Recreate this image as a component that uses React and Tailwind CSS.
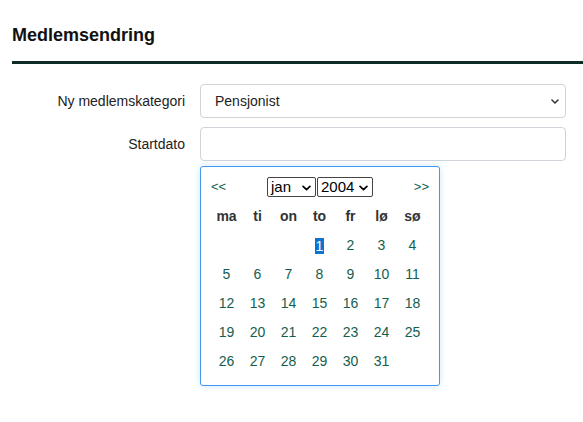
import React from 'react';

const DAYS = ['ma', 'ti', 'on', 'to', 'fr', 'lø', 'sø'];

const WEEKS = [
  [null, null, null, 1, 2, 3, 4],
  [5, 6, 7, 8, 9, 10, 11],
  [12, 13, 14, 15, 16, 17, 18],
  [19, 20, 21, 22, 23, 24, 25],
  [26, 27, 28, 29, 30, 31, null],
];

function Chevron({ className }) {
  return (
    <svg viewBox="0 0 10 6" className={className} fill="none" stroke="currentColor" strokeWidth="1.9" strokeLinecap="round" strokeLinejoin="round">
      <path d="M1.2 1.2 5 4.8 8.8 1.2" />
    </svg>
  );
}

function MiniSelect({ value, width }) {
  return (
    <div className={`relative h-[20px] ${width} border border-[#444] rounded-[2px] bg-white`}>
      <span className="absolute left-[3px] top-0 leading-[18px] text-[15px] text-black">{value}</span>
      <Chevron className="absolute right-[4px] top-[7px] w-[9px] h-[6px] text-black" />
    </div>
  );
}

function Calendar() {
  return (
    <div className="absolute left-0 top-[39px] w-[240px] h-[220px] bg-white border border-[#3d9af0] rounded-[3px] shadow-[0_0_6px_rgba(61,154,240,0.25)]">
      {/* header */}
      <div className="flex items-center justify-between px-[10px] pt-[10px] h-[30px]">
        <span className="text-[13px] text-[#135e4e] leading-4">&lt;&lt;</span>
        <div className="flex gap-[1px]">
          <MiniSelect value="jan" width="w-[49px]" />
          <MiniSelect value="2004" width="w-[56px]" />
        </div>
        <span className="text-[13px] text-[#135e4e] leading-4">&gt;&gt;</span>
      </div>

      {/* grid */}
      <div className="px-[10px] mt-[5px]">
        <div className="grid grid-cols-7 w-[217px]">
          {DAYS.map(d => (
            <div key={d} className="h-[29px] flex items-center justify-center text-[14px] font-bold text-[#333]">
              {d}
            </div>
          ))}
          {WEEKS.flat().map((n, i) => (
            <div key={i} className="h-[29px] flex items-center justify-center text-[14px] text-[#135e4e]">
              {n === 1 ? (
                <span className="inline-block bg-[#0a74cf] text-white leading-4 px-[1px]">1</span>
              ) : n}
            </div>
          ))}
        </div>
      </div>
    </div>
  );
}

export default function App() {
  return (
    <div className="w-[583px] h-[422px] bg-white text-[#212529] overflow-hidden" style={{ fontFamily: "'Liberation Sans', Arial, sans-serif" }}>
      {/* title */}
      <div className="pl-[12px] pt-[23px]">
        <h1 className="text-[18px] leading-6 font-bold text-[#111]">Medlemsendring</h1>
      </div>
      <div className="ml-[12px] mt-[14px] h-[3px] bg-[#0f2b28]" />

      {/* form */}
      <div className="mt-[20px] flex flex-col gap-[9px]">
        <div className="flex items-center">
          <label className="w-[185px] text-right text-[14px] text-[#222]">Ny medlemskategori</label>
          <div className="ml-[15px] w-[366px] h-[34px] relative border border-[#ced4da] rounded-[4px] bg-white flex items-center">
            <span className="pl-[14px] text-[14px] text-[#222]">Pensjonist</span>
            <Chevron className="absolute right-[6px] top-[14px] w-[8px] h-[5px] text-[#333]" />
          </div>
        </div>

        <div className="flex items-center">
          <label className="w-[185px] text-right text-[14px] text-[#222]">Startdato</label>
          <div className="ml-[15px] w-[366px] relative">
            <div className="h-[34px] border border-[#ced4da] rounded-[4px] bg-white" />
            <Calendar />
          </div>
        </div>
      </div>
    </div>
  );
}
